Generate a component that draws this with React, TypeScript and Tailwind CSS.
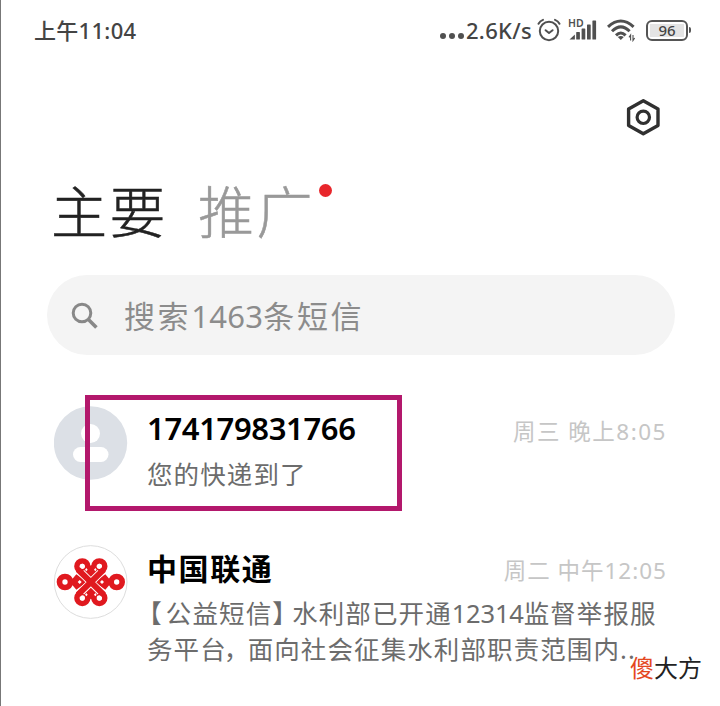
import type { ReactNode } from 'react'

type Message = {
  id: string
  name: string
  nameClass: string
  time: string
  timeClass: string
  avatar: ReactNode
  body: ReactNode
}

function AlarmIcon() {
  return (
    <svg className="h-6 w-6" viewBox="0 0 24 24" fill="none" stroke="#505050" strokeWidth="2" strokeLinecap="round">
      <circle cx="12" cy="13" r="9.2" />
      <path d="M1.5 5.8Q3 3 6 1.9M22.5 5.8Q21 3 18 1.9" />
      <path d="M8.6 12.2l3.4 2.8 3.6-2.8" strokeLinejoin="round" />
    </svg>
  )
}

function SignalIcon() {
  return (
    <svg className="h-6 w-7 overflow-visible" viewBox="0 0 28 24" fill="#505050">
      <text x="-1" y="8.5" fontSize="10.5" fontWeight="600" fontFamily="Noto Sans, sans-serif">HD</text>
      <path d="M0.5 21.5h5.4v-5z" />
      <rect x="7.2" y="14" width="3.7" height="7.5" rx="0.6" />
      <rect x="12.6" y="10.5" width="3.7" height="11" rx="0.6" />
      <rect x="18" y="6.5" width="3.7" height="15" rx="0.6" />
      <rect x="23.4" y="2.5" width="3.7" height="19" rx="0.6" />
    </svg>
  )
}

function WifiIcon() {
  return (
    <svg className="h-6 w-7" viewBox="0 0 28 24" fill="none" stroke="#505050" strokeWidth="3">
      <path d="M1 8.8Q13.8 -2.8 26.6 8.8" />
      <path d="M5 13.2Q13.8 4.6 22.6 13.2" />
      <path d="M9 17.4Q13.8 12.6 18.6 17.4" />
      <path d="M10.8 19Q13.8 17 16.8 19L13.8 22z" fill="#505050" stroke="none" />
      <path d="M23.6 22.5v-5.5l-1.6 2.4M26 17v5.5l1.6-2.4" strokeWidth="1.1" />
    </svg>
  )
}

function Battery({ level }: { level: number }) {
  return (
    <div className="flex items-center">
      <div className="flex h-[21px] w-[42px] items-center justify-center rounded-[6px] border-[2.5px] border-[#555] p-[2px]">
        <span className="flex h-full w-full items-center justify-center bg-[#e4e4e4] text-[15px] leading-none font-medium text-[#444]">{level}</span>
      </div>
      <div className="ml-[1px] h-[6px] w-[2px] rounded-r bg-[#555]" />
    </div>
  )
}

function SettingsIcon() {
  return (
    <svg className="h-10 w-10" viewBox="0 0 40 40" fill="none" stroke="#303030" strokeLinejoin="round">
      <path d="M20.3 3.8L35 12v16.5l-14.7 8.2L5.6 28.5V12z" strokeWidth="3.4" />
      <circle cx="20.3" cy="20.3" r="6.2" strokeWidth="3.2" />
    </svg>
  )
}

function SearchIcon() {
  return (
    <svg className="h-7 w-7" viewBox="0 0 28 28" fill="none" stroke="#888" strokeWidth="3">
      <circle cx="11" cy="12" r="8.8" />
      <path d="M17.2 18.2l8.2 8.2" strokeWidth="3.6" />
    </svg>
  )
}

function PersonAvatar() {
  return (
    <svg className="h-[74px] w-[74px]" viewBox="0 0 74 74">
      <circle cx="36.5" cy="37" r="36.7" fill="#dce0e6" />
      <circle cx="36.5" cy="27.5" r="9.5" fill="#fff" />
      <rect x="19" y="41" width="35.5" height="15" rx="7.5" fill="#fff" />
    </svg>
  )
}

function UnicomAvatar() {
  return (
    <svg className="h-[74px] w-[74px]" viewBox="0 0 222 222" fill="none">
      <circle cx="110" cy="111" r="109" fill="#fff" stroke="#ddd" strokeWidth="3" />
      {/* loops of the knot */}
      <g stroke="#e0191f" strokeWidth="17">
        <circle cx="85" cy="64" r="16" />
        <circle cx="136" cy="64" r="16" />
        <circle cx="85" cy="159" r="16" />
        <circle cx="136" cy="159" r="16" />
        <circle cx="33" cy="111" r="16.5" />
        <circle cx="188" cy="111" r="16.5" />
      </g>
      <g fill="#e0191f">
        <path d="M93 50L110.5 62 128 50 141 76 110.5 102 80 76z" />
        <path d="M93 173L110.5 161 128 173 141 147 110.5 121 80 147z" />
        <path d="M46 102h9l12-14 32 23-32 23-12-14h-9z" />
        <path d="M175 102h-9l-12-14-32 23 32 23 12-14h9z" />
      </g>
      <g fill="#fff">
        <circle cx="85" cy="64" r="8" />
        <circle cx="136" cy="64" r="8" />
        <circle cx="85" cy="159" r="8" />
        <circle cx="136" cy="159" r="8" />
        <path d="M97 69l4 5-4 5-4-5zM124 69l4 5-4 5-4-5zM97 144l4 5-4 5-4-5zM124 144l4 5-4 5-4-5z" />
        <path d="M77 105l6 6-6 6-6-6zM144 105l6 6-6 6-6-6z" />
      </g>
      <path d="M82 83l57 57M139 83l-57 57" stroke="#fff" strokeWidth="23" />
      <path d="M72 74l77 75M149 74l-77 75" stroke="#e0191f" strokeWidth="18" />
    </svg>
  )
}

const messages: Message[] = [
  {
    id: 'express',
    name: '174179831766',
    nameClass: 'pb-[5px] text-[31px] tracking-[-0.35px]',
    time: '周三 晚上8:05',
    timeClass: 'tracking-[1.5px]',
    avatar: <PersonAvatar />,
    body: '您的快递到了',
  },
  {
    id: 'unicom',
    name: '中国联通',
    nameClass: 'pb-[2px] text-[30px] tracking-[1.6px]',
    time: '周二 中午12:05',
    timeClass: 'tracking-[1px]',
    avatar: <UnicomAvatar />,
    body: (
      <>
        <span className="ml-[2px] mr-[3px] [font-feature-settings:'halt']">【</span>
        公益短信
        <span className="mr-[6px] [font-feature-settings:'halt']">】</span>
        水利部已开通<span className="tracking-[-0.2px]">12314</span>监督举报服
        <br />
        务平台<span className="-ml-[3px] mr-[10px] [font-feature-settings:'halt']">，</span>
        面向社会征集水利部职责范围内<span className="tracking-[1px]">..</span>
      </>
    ),
  },
]

export default function App() {
  return (
    <div className="relative h-[706px] w-[720px] overflow-hidden border-l border-[#777] bg-white font-['Noto_Sans','Noto_Sans_CJK_SC',sans-serif] whitespace-nowrap">
      <header className="flex h-[60px] items-center justify-between pr-[29px] pl-[33px] text-[#444]">
        <span className="text-[22px] leading-none font-medium tracking-[0.3px]">上午11:04</span>
        <div className="flex items-center">
          <div className="mt-3 mr-[2px] flex gap-[3px]">
            <i className="h-[6px] w-[6px] rounded-full bg-[#505050]" />
            <i className="h-[6px] w-[6px] rounded-full bg-[#505050]" />
            <i className="h-[6px] w-[6px] rounded-full bg-[#505050]" />
          </div>
          <span className="mr-[5px] text-[22px] leading-none font-medium tracking-[0.3px]">2.6K/s</span>
          <AlarmIcon />
          <div className="ml-2"><SignalIcon /></div>
          <div className="mr-[11px] ml-[10px]"><WifiIcon /></div>
          <Battery level={96} />
        </div>
      </header>

      <div className="mt-[37px] flex h-10 justify-end pr-[57px]">
        <SettingsIcon />
      </div>

      <nav className="mt-[34px] flex h-20 items-center pl-[50px] text-[56px] leading-none font-light tracking-[2.5px] [-webkit-text-stroke-width:0.5px]">
        <span className="text-[#222]">主要</span>
        <span className="relative ml-[30px] text-[#999]">
          推广
          <i className="absolute top-[1px] right-[-17px] h-[13px] w-[13px] rounded-full bg-[#e8262b]" />
        </span>
      </nav>

      <div className="mt-[24px] ml-[46px] flex h-20 w-[628px] items-center rounded-full bg-[#f4f4f4] pl-6 text-[#8c8c8c]">
        <SearchIcon />
        <span className="ml-[25px] pt-[2px] text-[31px] leading-none tracking-[2.6px]">
          搜索<span className="tracking-[0.3px]">1463</span>条短信
        </span>
      </div>

      <main className="mt-[51px] pl-[53px]">
        {messages.map((m) => (
          <section key={m.id} className="flex h-[139px]">
            {m.avatar}
            <div className="ml-[19px] w-[520px]">
              <div className="flex h-[50px] items-center justify-between">
                <h2 className={`leading-none font-semibold text-black ${m.nameClass}`}>{m.name}</h2>
                <time className={`pt-[3px] text-[22.5px] leading-none text-[#c6c6c6] ${m.timeClass}`}>{m.time}</time>
              </div>
              <p className="text-[25.5px] leading-9 tracking-[1.1px] text-[#6c6c6c]">{m.body}</p>
            </div>
          </section>
        ))}
      </main>

      {/* highlight around the first message */}
      <div className="absolute top-[395px] left-[84px] h-[116px] w-[317px] border-[5px] border-[#b3186c]" />
      <div className="absolute top-[656px] left-[629px] text-[24px] leading-none text-[#222]">
        <span className="text-[#e4481f]">傻</span>大方
      </div>
    </div>
  )
}
